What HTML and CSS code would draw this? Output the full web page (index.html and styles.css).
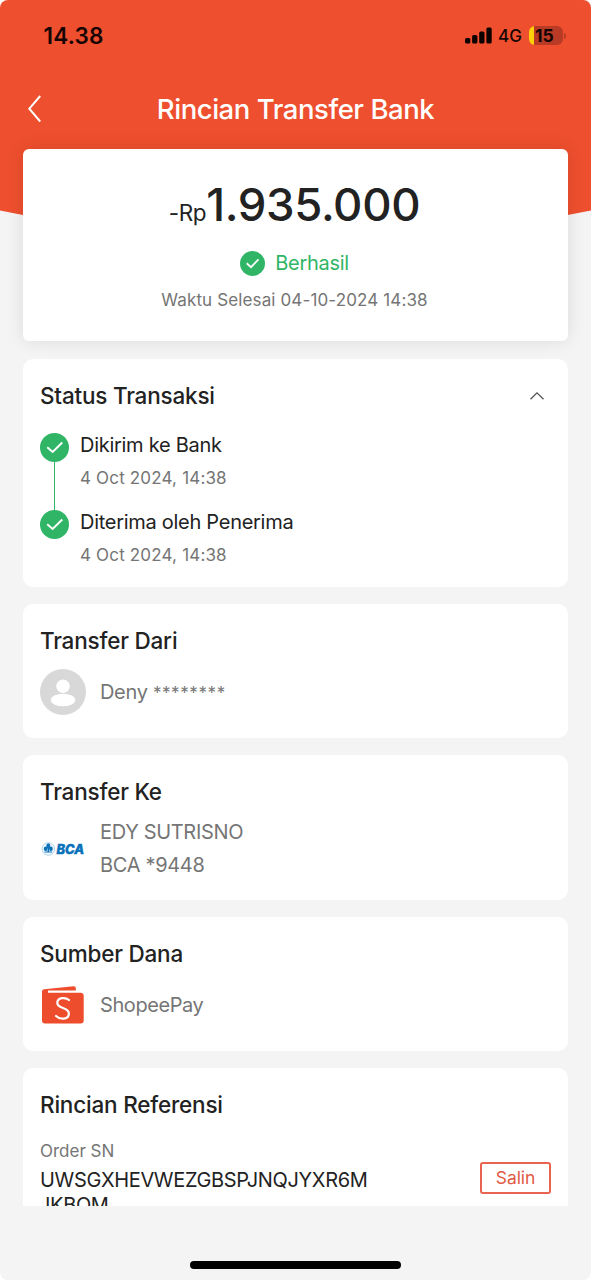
FILE: index.html
```html
<!DOCTYPE html>
<html lang="id">
<head>
<meta charset="utf-8">
<meta name="viewport" content="width=device-width, initial-scale=1">
<title>Rincian Transfer Bank</title>
<link rel="stylesheet" href="styles.css">
</head>
<body>
<div class="screen">
  <svg class="backdrop" width="591" height="245" viewBox="0 0 591 245"><path d="M0 0H591V210.500Q295.500 272 0 210.500Z" fill="#ee4f2e"/></svg>
  <header class="statusbar">
    <span class="time">14.38</span>
    <div class="indicators">
      <svg class="signal" width="28" height="18" viewBox="0 0 28 18"><rect x="0" y="11" width="5.300" height="5.500" rx="1.500"/><rect x="7.100" y="8" width="5.300" height="8.500" rx="1.500"/><rect x="14.200" y="4.500" width="5.300" height="12" rx="1.500"/><rect x="21.400" y="0.500" width="5.300" height="16" rx="1.500"/></svg>
      <span class="network">4G</span>
      <span class="battery">15</span>
      <span class="battery-cap"></span>
    </div>
  </header>
  <nav class="navbar">
    <svg class="back" width="16" height="30" viewBox="0 0 16 30"><path d="M14.200 2L3.300 14.700L14.200 27.500" fill="none" stroke="#fff" stroke-width="2"/></svg>
    <h1 class="title">Rincian Transfer Bank</h1>
  </nav>
  <main class="content">
    <section class="card summary">
      <div class="amount"><span class="currency">-Rp</span><span class="value">1.935.000</span></div>
      <div class="result">
        <svg width="25" height="25" viewBox="0 0 28 28"><circle cx="14" cy="14" r="14" fill="#30b566"/><path d="M7.500 13.700L12.300 18.100L20.700 9.500" fill="none" stroke="#fff" stroke-width="2"/></svg>
        <span class="result-text">Berhasil</span>
      </div>
      <div class="finished">Waktu Selesai 04-10-2024 14:38</div>
    </section>

    <section class="card status">
      <div class="card-head">
        <h2>Status Transaksi</h2>
        <svg class="chevron" width="16" height="10" viewBox="0 0 16 10"><path d="M1.500 8.300L8 1.800L14.500 8.300" fill="none" stroke="#555" stroke-width="1.300"/></svg>
      </div>
      <div class="step">
        <div class="rail"><svg width="29" height="29" viewBox="0 0 28 28"><circle cx="14" cy="14" r="14" fill="#30b566"/><path d="M7 13.800L12.200 18.300L21.500 9.200" fill="none" stroke="#fff" stroke-width="1.900"/></svg><span class="line"></span></div>
        <div class="step-text"><div class="step-name">Dikirim ke Bank</div><div class="step-time">4 Oct 2024, 14:38</div></div>
      </div>
      <div class="step">
        <div class="rail"><svg width="29" height="29" viewBox="0 0 28 28"><circle cx="14" cy="14" r="14" fill="#30b566"/><path d="M7 13.800L12.200 18.300L21.500 9.200" fill="none" stroke="#fff" stroke-width="1.900"/></svg></div>
        <div class="step-text"><div class="step-name">Diterima oleh Penerima</div><div class="step-time">4 Oct 2024, 14:38</div></div>
      </div>
    </section>

    <section class="card from">
      <h2>Transfer Dari</h2>
      <div class="party">
        <svg width="46" height="46" viewBox="0 0 46 46"><circle cx="23" cy="23" r="23" fill="#d8d8d8"/><circle cx="23" cy="17.300" r="6.700" fill="#fff"/><ellipse cx="23" cy="31" rx="12.200" ry="6.300" fill="#fff"/></svg>
        <div class="party-text">Deny <span class="mask">********</span></div>
      </div>
    </section>

    <section class="card to">
      <h2>Transfer Ke</h2>
      <div class="party">
        <svg width="46" height="16" viewBox="0 0 46 16"><circle cx="8.300" cy="8" r="6.300" fill="#f3f9fd" stroke="#9dcbea" stroke-width=".8"/><g fill="#0871b9"><ellipse cx="8.300" cy="4.800" rx="2" ry="2.500"/><ellipse cx="5.700" cy="7.800" rx="1.900" ry="2.300"/><ellipse cx="10.900" cy="7.800" rx="1.900" ry="2.300"/><path d="M7.600 6h1.400v4.500H7.600zM4.500 10.500h7.600v1H4.500z"/></g><text class="bca" x="16.500" y="13" textLength="27.500" lengthAdjust="spacingAndGlyphs">BCA</text></svg>
        <div class="party-text"><div>EDY SUTRISNO</div><div>BCA *9448</div></div>
      </div>
    </section>

    <section class="card source">
      <h2>Sumber Dana</h2>
      <div class="party">
        <svg width="46" height="46" viewBox="0 0 46 46"><path d="M2 9.500Q2 7.500 4 7.200L33.500 4.300Q35.800 4.100 35.800 6V8.500H8V10.700H40.500Q43.700 10.700 43.700 14V38.500Q43.700 41.500 40.700 41.500H5Q2 41.500 2 38.500Z" fill="#ee4d2d"/><path d="M29 18C25.500 15 17.300 15.200 17.300 21C17.300 27.200 28.900 24.700 28.900 31.500C28.900 37.800 20 37.800 16 34" fill="none" stroke="#fff" stroke-width="2.200" stroke-linecap="round"/></svg>
        <div class="party-text pay">ShopeePay</div>
      </div>
    </section>

    <section class="card reference">
      <h2>Rincian Referensi</h2>
      <div class="ref-row">
        <div class="ref-text"><div class="ref-label">Order SN</div><div class="ref-value">UWSGXHEVWEZGBSPJNQJYXR6M<br><span class="ref-tail">JKBOM</span></div></div>
        <button class="copy">Salin</button>
      </div>
    </section>
  </main>
  <footer class="home"><span class="home-bar"></span></footer>
</div>
</body>
</html>
```
FILE: styles.css
```css
* { box-sizing: border-box; }
html { background: #fff; }
body { margin: 0; font-family: Inter, "Liberation Sans", sans-serif; color: #222; }
h1, h2 { margin: 0; font-weight: 500; }
svg { display: block; flex: none; }
.screen { position: relative; display: flex; flex-direction: column; width: 591px; height: 1280px; overflow: hidden; background: #f4f4f4; border-radius: 8px; }
.backdrop { position: absolute; top: 0; left: 0; }
.statusbar, .navbar, .content, .home { position: relative; white-space: nowrap; }

.statusbar { display: flex; justify-content: space-between; align-items: center; height: 71px; padding: 0 25px 0 43.500px; color: #160503; }
.time { font-size: 22.500px; font-weight: 600; letter-spacing: .2px; }
.indicators { display: flex; align-items: center; }
.signal { fill: #0b0201; margin-right: 5px; }
.network { width: 24px; font-size: 17px; font-weight: 500; margin-right: 7px; }
.battery { width: 34px; height: 19px; padding-left: 6px; border-radius: 6px; background: linear-gradient(90deg, #ffcf0a 0 5px, #b93a25 5px); font-size: 17.500px; font-weight: 700; line-height: 19px; }
.battery-cap { width: 2px; height: 6px; margin-left: 1px; border-radius: 0 3px 3px 0; background: #b93a25; }

.navbar { display: grid; grid-template-columns: 26px 1fr 26px; align-items: center; height: 78px; padding: 0 26px 2px; }
.title { text-align: center; color: #fff; font-size: 27.500px; letter-spacing: -.45px; }

.content { display: flex; flex-direction: column; gap: 17px; height: 1057px; padding: 0 23px; clip-path: inset(-30px 0 0 0); }
.card { flex: none; padding: 0 17px; border-radius: 10px; background: #fff; }
.card h2 { font-size: 22.500px; line-height: 28px; letter-spacing: -.2px; }

.summary { height: 192.400px; margin-bottom: .6px; padding-right: 19px; display: flex; flex-direction: column; align-items: center; border-radius: 6px; box-shadow: 0 0 18px rgba(0,0,0,.1); }
.amount { display: flex; align-items: baseline; margin-top: 28px; line-height: 56px; }
.currency { font-size: 22.500px; letter-spacing: -.4px; }
.value { font-size: 45.500px; font-weight: 500; letter-spacing: -.35px; }
.result { display: flex; align-items: center; gap: 10px; height: 26px; margin-top: 9px; color: #30b566; font-size: 20px; letter-spacing: -.3px; }
.finished { margin-top: 13px; color: #757575; font-size: 17px; line-height: 22px; letter-spacing: .13px; }

.status { height: 228px; padding-top: 23px; }
.card-head { display: flex; justify-content: space-between; align-items: center; padding-right: 6px; margin-bottom: 23px; }
.step { display: flex; height: 77px; }
.rail { display: flex; flex-direction: column; align-items: center; width: 29px; margin-right: 11px; }
.line { width: 1.500px; height: 48px; background: #30b566; }
.step-name { font-size: 20px; line-height: 24px; letter-spacing: -.28px; }
.step-time { margin-top: 9px; color: #757575; font-size: 17px; line-height: 24px; letter-spacing: .17px; }

.from, .source { height: 134px; padding-top: 23px; }
.to { height: 145px; padding-top: 23px; }
.party { display: flex; align-items: center; gap: 14px; margin-top: 14px; color: #757575; font-size: 20px; letter-spacing: -.32px; }
.mask { font-size: 17px; letter-spacing: .6px; }
.pay { letter-spacing: -.42px; }
.to .party { margin-top: 10px; line-height: 33px; }
.bca { font: italic 800 13px Inter, sans-serif; fill: #0871b9; stroke: #0871b9; stroke-width: .5px; letter-spacing: 0; }

.reference { height: 220px; padding-top: 23px; }
.ref-row { display: flex; justify-content: space-between; margin-top: 20px; }
.ref-label { color: #757575; font-size: 17px; line-height: 24px; }
.ref-value { margin-top: 5px; font-size: 20px; line-height: 25px; letter-spacing: -.34px; }
.ref-tail { margin-left: -1px; }
.copy { width: 71px; height: 32px; margin: 23px 0 0; padding: 0; border: 2px solid #e86450; border-radius: 3px; background: #fff; color: #e15a45; font: 400 17.500px Inter, sans-serif; letter-spacing: -.1px; }
.home { display: flex; justify-content: center; height: 74px; padding-top: 55px; }
.home-bar { width: 211px; height: 8px; border-radius: 4px; background: #000; }
```
